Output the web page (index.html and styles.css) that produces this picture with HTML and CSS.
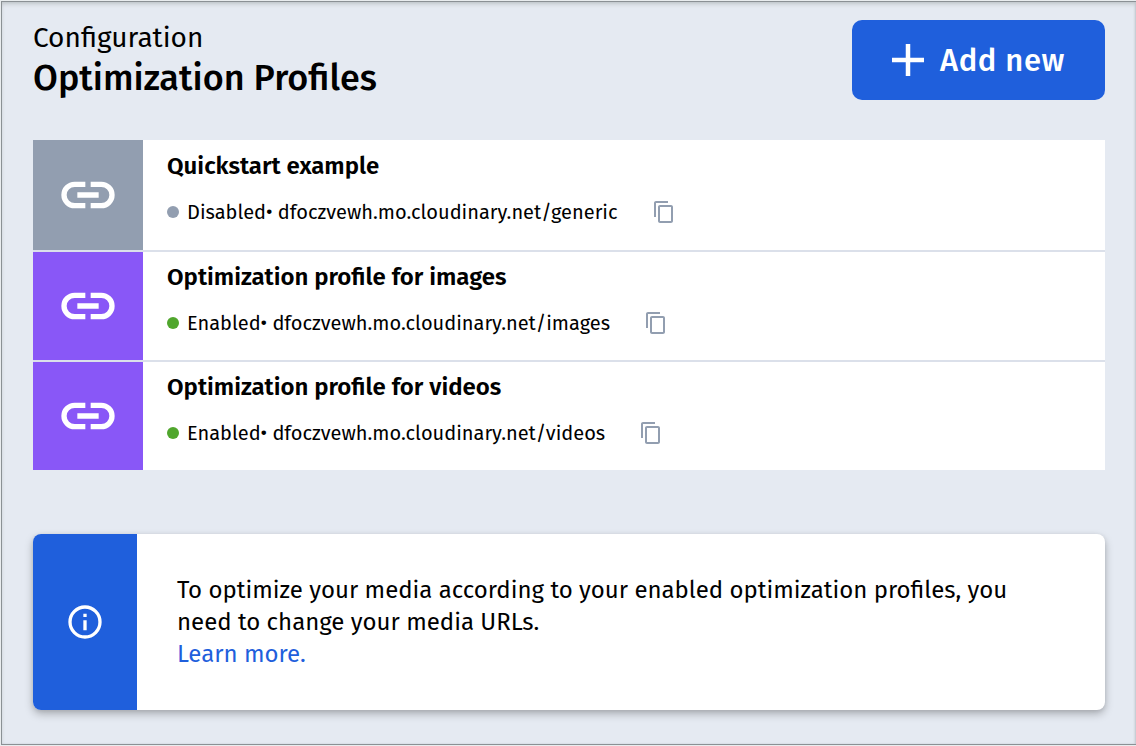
FILE: index.html
```html
<!DOCTYPE html>
<html lang="en">
<head>
<meta charset="utf-8">
<title>Optimization Profiles</title>
<link rel="stylesheet" href="styles.css">
</head>
<body>
<svg class="defs" width="0" height="0">
  <symbol id="link" viewBox="0 0 24 24"><path d="M11 8H7a4 4 0 0 0 0 8h4M13 8h4a4 4 0 0 1 0 8h-4M8 12h8" fill="none" stroke="#fff" stroke-width="2"/></symbol>
  <symbol id="copy" viewBox="0 0 24 24"><path fill="currentColor" d="M16 1H4c-1.100 0-2 .9-2 2v14h2V3h12V1zm3 4H8c-1.100 0-2 .9-2 2v14c0 1.100.9 2 2 2h11c1.100 0 2-.9 2-2V7c0-1.100-.9-2-2-2zm0 16H8V7h11v14z"/></symbol>
</svg>
<main class="frame">
  <header class="header">
    <div>
      <div class="eyebrow">Configuration</div>
      <h1 class="title">Optimization Profiles</h1>
    </div>
    <button class="add"><svg class="plus" viewBox="0 0 32 32"><path d="M16 0v32M0 16h32" stroke="#fff" stroke-width="4.500"/></svg><span>Add new</span></button>
  </header>
  <ul class="profiles">
    <li class="profile first">
      <div class="tile off"><svg class="link"><use href="#link"/></svg></div>
      <div class="info">
        <h2 class="name">Quickstart example</h2>
        <div class="meta"><i class="dot off"></i><span class="url">Disabled• dfoczvewh.mo.cloudinary.net/generic</span><svg class="copy"><use href="#copy"/></svg></div>
      </div>
    </li>
    <li class="profile">
      <div class="tile"><svg class="link"><use href="#link"/></svg></div>
      <div class="info">
        <h2 class="name">Optimization profile for images</h2>
        <div class="meta"><i class="dot"></i><span class="url">Enabled• dfoczvewh.mo.cloudinary.net/images</span><svg class="copy"><use href="#copy"/></svg></div>
      </div>
    </li>
    <li class="profile">
      <div class="tile"><svg class="link"><use href="#link"/></svg></div>
      <div class="info">
        <h2 class="name">Optimization profile for videos</h2>
        <div class="meta"><i class="dot"></i><span class="url">Enabled• dfoczvewh.mo.cloudinary.net/videos</span><svg class="copy"><use href="#copy"/></svg></div>
      </div>
    </li>
  </ul>
  <section class="notice">
    <div class="notice-icon"><svg class="info-icon" viewBox="0 0 24 24"><circle cx="12" cy="12" r="9" fill="none" stroke="#fff" stroke-width="2"/><path fill="#fff" d="M11 7h2v2h-2zM11 11h2v6h-2z"/></svg></div>
    <p class="notice-text">To optimize your media according to your enabled optimization profiles, you<br>need to change your media URLs.<br><a class="learn">Learn more.</a></p>
  </section>
</main>
</body>
</html>
```
FILE: styles.css
```css
* { box-sizing: border-box; }
body { margin: 0; height: 746px; overflow: hidden; padding: 1px 0 1px 1px; background: #e9edef; font-family: "Fira Sans", "Open Sans", sans-serif; color: #000; }
.defs { position: absolute; }
.frame { height: 744px; padding: 18px 31px 0; border: 1px solid #8b9195; border-right: 0; background: #e5eaf2; box-shadow: inset 0 3px 4px -1px #bfc5c9, inset -1px 0 2px #c3c8d0; }
.header { display: flex; justify-content: space-between; height: 120px; }
.eyebrow { font-size: 28px; line-height: 36px; white-space: nowrap; }
.title { margin: 0; font-size: 36px; line-height: 44px; font-weight: 500; white-space: nowrap; }
.add { display: flex; align-items: center; gap: 16px; width: 253px; height: 80px; padding: 0 0 0 40px; border: 0; border-radius: 10px; background: #1f5fdc; color: #fff; font: 500 31px "Fira Sans", "Open Sans", sans-serif; letter-spacing: .6px; white-space: nowrap; }
.plus { width: 32px; height: 32px; flex: none; }
.profiles { margin: 0; padding: 0; list-style: none; }
.profile { display: flex; height: 110px; border-top: 2px solid #dbe0ea; background: #fff; }
.first { border-top: 0; }
.tile { display: flex; align-items: center; justify-content: center; width: 110px; background: #8957f7; }
.tile.off { background: #929eb0; }
.link { width: 64px; height: 64px; }
.info { padding: 9px 0 0 24px; }
.first .info { padding-top: 10px; }
.name { margin: 0; font-size: 24px; line-height: 32px; font-weight: 600; white-space: nowrap; }
.meta { display: flex; align-items: center; height: 24px; margin-top: 18px; }
.dot { width: 12px; height: 12px; margin-right: 8px; border-radius: 50%; background: #50a62d; }
.dot.off { background: #929eb0; }
.url { font-size: 20px; line-height: 24px; white-space: nowrap; }
.copy { width: 24px; height: 24px; margin-left: 34px; color: #929eb0; }
.notice { display: flex; height: 176px; margin-top: 64px; overflow: hidden; border-radius: 8px; background: #fff; box-shadow: 0 4px 8px rgba(0,0,0,.25), 0 1px 4px rgba(0,0,0,.08); }
.notice-icon { display: flex; align-items: center; justify-content: center; width: 104px; background: #1f5fdc; }
.info-icon { width: 40px; height: 40px; }
.notice-text { margin: 0; padding: 40px; font-size: 24px; line-height: 32px; white-space: nowrap; }
.learn { color: #1f5fdc; }
```
